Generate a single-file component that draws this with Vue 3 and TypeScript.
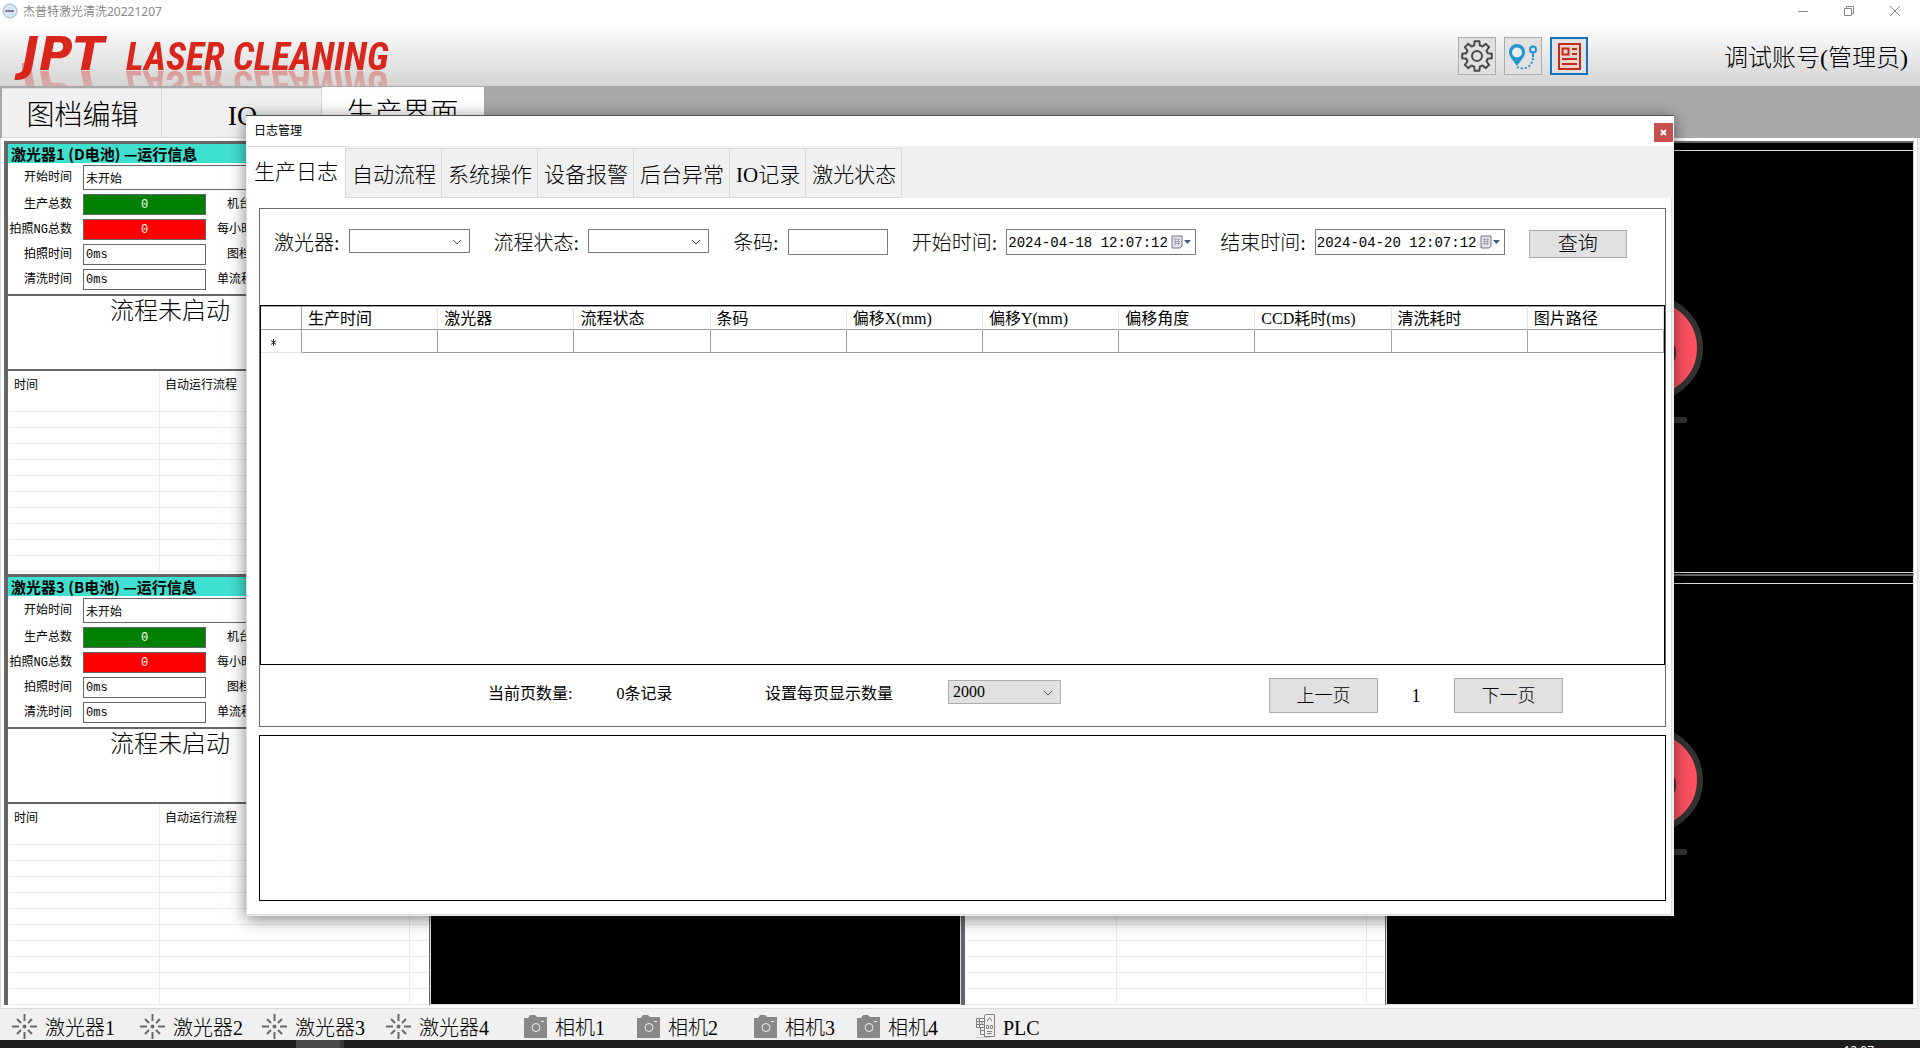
<script setup lang="ts">
import { ref } from 'vue'

interface Station {
  title: string
  start: string
  total: string
  ng: string
  photo: string
  wash: string
  state: string
}

const mainTabs = ['图档编辑', 'IO', '生产界面']
const activeMain = ref(2)

const stations: Station[] = [
  { title: '激光器1 (D电池) —运行信息', start: '未开始', total: '0', ng: '0', photo: '0ms', wash: '0ms', state: '流程未启动' },
  { title: '激光器3 (B电池) —运行信息', start: '未开始', total: '0', ng: '0', photo: '0ms', wash: '0ms', state: '流程未启动' },
]

const logTabs = ['生产日志', '自动流程', '系统操作', '设备报警', '后台异常', 'IO记录', '激光状态']
const activeLog = ref(0)

const columns = ['生产时间', '激光器', '流程状态', '条码', '偏移X(mm)', '偏移Y(mm)', '偏移角度', 'CCD耗时(ms)', '清洗耗时', '图片路径']

const startTime = ref('2024-04-18 12:07:12')
const endTime = ref('2024-04-20 12:07:12')
const barcode = ref('')
const page = ref(1)

const devices = [
  { kind: 'laser', name: '激光器1' },
  { kind: 'laser', name: '激光器2' },
  { kind: 'laser', name: '激光器3' },
  { kind: 'laser', name: '激光器4' },
  { kind: 'camera', name: '相机1' },
  { kind: 'camera', name: '相机2' },
  { kind: 'camera', name: '相机3' },
  { kind: 'camera', name: '相机4' },
  { kind: 'plc', name: 'PLC' },
]

// Outline of an eight-toothed gear centred on 18,18
function gearPath(): string {
  const pts: string[] = []
  const add = (r: number, deg: number) => {
    const a = (deg * Math.PI) / 180
    pts.push(`${(18 + r * Math.cos(a)).toFixed(2)} ${(18 + r * Math.sin(a)).toFixed(2)}`)
  }
  for (let i = 0; i < 8; i++) {
    const c = i * 45
    add(11, c - 15)
    add(15, c - 9)
    add(15, c + 9)
    add(11, c + 15)
  }
  return `M${pts.join('L')}Z`
}
const gear = gearPath()
</script>

<template>
  <div class="app">
    <div class="titlebar">
      <svg class="app-icon" viewBox="0 0 16 16" width="16" height="16">
        <circle cx="8" cy="8" r="7" fill="#d5e6f3" stroke="#9db4c6" />
        <path d="M3.500 8h9" stroke="#4d6fa8" stroke-width="2" stroke-dasharray="2 1" />
        <path d="M5.500 8h1M9 8h1" stroke="#c0504d" stroke-width="2" />
      </svg>
      <span class="app-title">杰普特激光清洗20221207</span>
      <div class="win-buttons">
        <button type="button" aria-label="最小化"><svg width="12" height="12" viewBox="0 0 12 12"><path d="M1 6.500h10" /></svg></button>
        <button type="button" aria-label="还原"><svg width="12" height="12" viewBox="0 0 12 12"><path d="M1.500 3.500h7v7h-7zM3.500 3.500v-2h7v7h-2" /></svg></button>
        <button type="button" aria-label="关闭"><svg width="12" height="12" viewBox="0 0 12 12"><path d="M1 1l10 10M11 1L1 11" /></svg></button>
      </div>
    </div>

    <header class="banner">
      <div class="logo"><span class="mark">JPT</span><span class="words">LASER CLEANING</span></div>
      <div class="tools">
        <button type="button" class="tool" aria-label="设置">
          <svg width="36" height="36" viewBox="0 0 36 36" fill="none" stroke="#4a4a4a" stroke-width="2" stroke-linejoin="round">
            <path :d="gear" /><circle cx="18" cy="18" r="5" />
          </svg>
        </button>
        <button type="button" class="tool" aria-label="路径">
          <svg width="36" height="36" viewBox="0 0 36 36" fill="none" stroke="#2494d2">
            <path d="M12 28C9 23 4 19 4 14a8 8 0 0 1 16 0c0 5-5 9-8 14z" fill="#2494d2" stroke="none" />
            <circle cx="12" cy="14.500" r="5" fill="#e6eef3" stroke="none" />
            <circle cx="28" cy="11.500" r="3" stroke-width="2" /><path d="M28 15v4" stroke-width="2" />
            <path d="M12 29c5 3 15 2 16-9" stroke-width="2" stroke-dasharray="2 2" />
          </svg>
        </button>
        <button type="button" class="tool on" aria-label="日志">
          <svg width="34" height="34" viewBox="0 0 34 34" fill="none" stroke="#c02c17" stroke-width="2">
            <path d="M7 5h21v25H7z" fill="#f3d3cd" />
            <path d="M10.500 9.500h6v6h-6zM20 10h5M20 15h5M10 20h15M10 25h15" />
          </svg>
        </button>
      </div>
      <div class="user">调试账号(管理员)</div>
    </header>

    <nav class="main-tabs">
      <button v-for="(t, i) in mainTabs" :key="t" type="button" class="main-tab" :class="{ active: i === activeMain }" @click="activeMain = i">{{ t }}</button>
    </nav>

    <main class="workspace">
      <template v-for="(s, i) in stations" :key="s.title">
        <section class="station">
          <h2>{{ s.title }}</h2>
          <div class="info">
            <label :for="'start' + i">开始时间</label>
            <input :id="'start' + i" class="start" :value="s.start" readonly />
            <label :for="'total' + i">生产总数</label>
            <input :id="'total' + i" class="count ok" :value="s.total" readonly />
            <span class="side short">机台</span>
            <label :for="'ng' + i">拍照NG总数</label>
            <input :id="'ng' + i" class="count bad" :value="s.ng" readonly />
            <span class="side">每小时</span>
            <label :for="'photo' + i">拍照时间</label>
            <input :id="'photo' + i" :value="s.photo" readonly />
            <span class="side short">图档</span>
            <label :for="'wash' + i">清洗时间</label>
            <input :id="'wash' + i" :value="s.wash" readonly />
            <span class="side">单流程</span>
          </div>
          <div class="state">{{ s.state }}</div>
          <table class="flow">
            <thead><tr><th class="c-time">时间</th><th class="c-flow">自动运行流程</th><th></th></tr></thead>
            <tbody><tr v-for="n in 11" :key="n"><td></td><td></td><td></td></tr></tbody>
          </table>
        </section>
        <div class="view" :class="{ last: i === 1 }"><div class="canvas"></div></div>
        <section class="station lower">
          <table class="flow">
            <thead><tr><th class="c-time"></th><th class="c-flow"></th><th></th></tr></thead>
            <tbody><tr v-for="n in 11" :key="n"><td></td><td></td><td></td></tr></tbody>
          </table>
        </section>
        <div class="view" :class="{ last: i === 1 }">
          <div class="canvas">
            <svg width="128" height="134" viewBox="0 0 128 134">
              <circle cx="64" cy="53" r="50" fill="#ff5160" stroke="#333" stroke-width="6" />
              <ellipse cx="64" cy="58" rx="26" ry="22" fill="#333" />
              <path d="M30 125h68" stroke="#333" stroke-width="6" stroke-linecap="round" />
            </svg>
          </div>
        </div>
      </template>
    </main>

    <footer class="devices">
      <div v-for="d in devices" :key="d.name" class="device">
        <svg v-if="d.kind === 'laser'" width="25" height="25" viewBox="0 0 25 25" stroke="#6a6a6a" stroke-width="2">
          <path d="M12.500 0v7M12.500 18v7M0 12.500h7M18 12.500h7M5 5l4 4M16 16l4 4M5 20l4-4M16 9l4-4" />
          <circle cx="12.500" cy="12.500" r="1" />
        </svg>
        <svg v-else-if="d.kind === 'camera'" width="23" height="23" viewBox="0 0 23 23">
          <path d="M0 3h4l2-3h5l2 2h10v20a1 1 0 0 1-1 1H1a1 1 0 0 1-1-1z" fill="#888" />
          <circle cx="12" cy="12.500" r="4" fill="none" stroke="#f0f0f0" /><path d="M17 6.500h3" stroke="#f0f0f0" />
        </svg>
        <svg v-else width="19" height="24" viewBox="0 0 19 24" fill="none" stroke="#808080">
          <path d="M8.500 1.500l2-1h8v22h-10zM.500 4.500h8v9h-8zM1 7.500h7M1 10.500h7M4.500 14v6.500h4M4.500 16.500h4" />
          <path d="M3.500 5v8M6 7v4M11 7.500l2.500-4 2.500 4M10.500 11.500h2v3h-2zM14.500 11.500h2v3h-2zM11 19.500h5M11 17.500h5" />
          <path d="M0 23.500h14" stroke="#ccc" />
        </svg>
        <span>{{ d.name }}</span>
      </div>
    </footer>
    <div class="taskbar"><span class="task"></span><span class="task-edge"></span><span class="clock">12:07</span></div>

    <section class="dialog" role="dialog" aria-labelledby="dlg-title">
      <div class="dlg-head">
        <span id="dlg-title">日志管理</span>
        <button type="button" class="close" aria-label="关闭"><svg width="7" height="7" viewBox="0 0 7 7"><path d="M1 1l5 5M6 1L1 6" stroke="#fff" stroke-width="2" /></svg></button>
      </div>
      <nav class="log-tabs">
        <button v-for="(t, i) in logTabs" :key="t" type="button" class="log-tab" :class="{ active: i === activeLog }" @click="activeLog = i">{{ t }}</button>
      </nav>
      <div class="dlg-body">
        <div class="log-panel">
          <form class="filters" @submit.prevent>
            <div class="field">
              <label for="laser">激光器:</label>
              <span class="combo"><select id="laser"><option></option></select><svg width="10" height="6" viewBox="0 0 10 6"><path d="M1 1l4 4 4-4" /></svg></span>
            </div>
            <div class="field">
              <label for="flow">流程状态:</label>
              <span class="combo"><select id="flow"><option></option></select><svg width="10" height="6" viewBox="0 0 10 6"><path d="M1 1l4 4 4-4" /></svg></span>
            </div>
            <div class="field"><label for="code">条码:</label><input id="code" v-model="barcode" class="code" /></div>
            <div class="field">
              <label for="from">开始时间:</label>
              <span class="date"><input id="from" v-model="startTime" /><button type="button" aria-label="选择开始时间"><svg width="20" height="14" viewBox="0 0 20 14"><path d="M1 1h10v10l-2 2H1z" fill="#e4e4ea" stroke="#77737a" /><path d="M3 4.500h6M3 6.500h6M3 8.500h6M4.500 3v7M7.500 3v7" stroke="#a3a8bb" /><path d="M13 5h7l-3.500 4z" fill="#41588c" /></svg></button></span>
            </div>
            <div class="field">
              <label for="to">结束时间:</label>
              <span class="date"><input id="to" v-model="endTime" /><button type="button" aria-label="选择结束时间"><svg width="20" height="14" viewBox="0 0 20 14"><path d="M1 1h10v10l-2 2H1z" fill="#e4e4ea" stroke="#77737a" /><path d="M3 4.500h6M3 6.500h6M3 8.500h6M4.500 3v7M7.500 3v7" stroke="#a3a8bb" /><path d="M13 5h7l-3.500 4z" fill="#41588c" /></svg></button></span>
            </div>
            <button type="submit" class="btn query">查询</button>
          </form>
          <div class="grid-box">
            <table class="records">
              <thead><tr><th class="mark-col"></th><th v-for="c in columns" :key="c">{{ c }}</th></tr></thead>
              <tbody><tr><td class="mark-col"><svg width="5" height="7" viewBox="0 0 5 7"><path d="M2.500 0v7M0 1.500l5 4M5 1.500l-5 4" stroke="#222" /></svg></td><td v-for="c in columns" :key="c"></td></tr></tbody>
            </table>
          </div>
          <div class="pager">
            <div class="pager-info"><span>当前页数量:</span><span>0条记录</span></div>
            <label for="size">设置每页显示数量</label>
            <span class="combo size"><select id="size"><option>2000</option></select><svg width="10" height="6" viewBox="0 0 10 6"><path d="M1 1l4 4 4-4" /></svg></span>
            <div class="pager-nav">
              <button type="button" class="btn step">上一页</button>
              <span class="page-no">{{ page }}</span>
              <button type="button" class="btn step">下一页</button>
            </div>
          </div>
        </div>
        <div class="output"></div>
      </div>
    </section>
  </div>
</template>

<style>
body { margin: 0; overflow: hidden; }
</style>

<style scoped>
.app, .app * { box-sizing: border-box; }
.app {
  position: relative;
  display: flex;
  flex-direction: column;
  height: 100vh;
  overflow: hidden;
  background: #f0f0f0;
  color: #000;
  font-family: "Liberation Serif", "Noto Sans CJK SC", serif;
  font-weight: 300;
}
button, input, select { font: inherit; color: inherit; margin: 0; padding: 0; border-radius: 0; outline: none; }
svg { display: block; flex: none; }

.titlebar { display: flex; align-items: center; height: 23px; background: #fff; padding: 0 2px; flex: none; }
.app-icon { margin-bottom: 2px; }
.app-title { margin-left: 5px; font: 12px/20px "Noto Sans", "Noto Sans CJK SC", sans-serif; color: #888; flex: 1; }
.win-buttons { display: flex; }
.win-buttons button { width: 46px; height: 22px; display: grid; place-items: center; border: 0; background: none; }
.win-buttons svg { fill: none; stroke: #888; margin-bottom: 2px; }

.banner { display: flex; align-items: center; height: 63px; flex: none; overflow: hidden; padding: 0 12px 0 22px; background: linear-gradient(#fff, #d4d4d4); }
.logo { flex: 1; display: flex; align-items: baseline; height: 47px; line-height: 47px; color: #d9261c; font-weight: 700; font-style: italic; -webkit-box-reflect: below -15px linear-gradient(transparent, rgba(0, 0, 0, 0.45)); }
.mark { width: 104px; font-family: "DejaVu Sans", sans-serif; font-size: 46px; }
.words { font-family: "Roboto Condensed", "Liberation Sans Narrow", "Noto Sans CJK SC", sans-serif; font-size: 38px; white-space: nowrap; }
.tools { display: flex; gap: 8px; margin-top: 2px; }
.tool { width: 38px; height: 38px; display: grid; place-items: center; border: 1px solid #adadad; background: #e1e1e1; }
.tool.on { border: 2px solid #1373bf; }
.user { width: 320px; text-align: right; font-size: 24px; line-height: 32px; padding-top: 6px; }

.main-tabs { display: flex; align-items: flex-end; height: 52px; flex: none; background: #a9a9a9; padding-left: 2px; }
.main-tab { width: 160px; height: 50px; border: 1px solid #d9d9d9; border-left-width: 0; background: #f0f0f0; font-size: 28px; line-height: 42px; padding: 6px 0 0 2px; }
.main-tab.active { width: 162px; height: 51px; background: #fff; border-color: #fff; padding: 2px 0 0; }

.workspace { flex: 1; min-height: 0; display: grid; grid-template-columns: 426fr 531fr 425fr 528fr; grid-template-rows: 433fr 431fr; background: #fff; border: solid #d9d9d9; border-width: 0 1px 1px; padding: 3px; margin-right: 2px; }
.station { display: flex; flex-direction: column; min-width: 0; min-height: 0; overflow: hidden; border: solid #66666a; border-width: 3px 1px 0 4px; background: #fff; }
.station h2 { margin: 0; height: 19px; padding-left: 3px; background: #40e0d0; font: 700 15px/19px "Noto Sans CJK SC", sans-serif; white-space: nowrap; flex: none; }
.info { display: grid; grid-template-columns: 64px 123px 1fr; grid-template-rows: 25px repeat(4, 21px); gap: 4px 11px; padding: 2px 0 4px; font: 400 12px/20px "Liberation Mono", "Noto Sans CJK SC", monospace; align-items: center; flex: none; }
.info label { text-align: right; white-space: nowrap; }
.info input { width: 100%; height: 100%; border: 1px solid #66666a; background: #fff; padding: 0 2px; }
.info .start { grid-column: 2 / 4; }
.info .count { text-align: center; color: #fff; }
.info .ok { background: #008000; }
.info .bad { background: #f00; }
.side.short { padding-left: 10px; }
.state { height: 75px; flex: none; border-top: 2px solid #66666a; padding-left: 102px; font-size: 24px; line-height: 30px; }
.flow { width: 100%; flex: none; border-collapse: separate; border-spacing: 0; table-layout: fixed; border-top: 2px solid #66666a; font-size: 12px; font-weight: 400; padding: 0 1px; }
.flow th { height: 25px; padding: 2px 0 0 5px; border-right: 1px solid #ececec; text-align: left; font-weight: 400; line-height: 16px; }
.flow td { height: 16px; padding: 0; border: solid #ececec; border-width: 0 1px 1px 0; }
.flow th:last-child, .flow td:last-child { border-right: 0; }
.c-time { width: 151px; }
.c-flow { width: 250px; }
.lower { justify-content: flex-end; }
.view { min-width: 0; min-height: 0; display: flex; background: #000; border: solid #ddd; border-width: 2px 1px 0; border-top-color: #666; padding: 7px 0 1px; }
.view.last { padding-bottom: 0; }
.canvas { flex: 1; display: flex; align-items: center; justify-content: center; border: solid #ddd; border-width: 1px 0; }

.devices { display: grid; grid-template-columns: 128px 122px 124px 138px 113px 117px 103px 119px auto; height: 31px; flex: none; padding-left: 12px; font-size: 20px; line-height: 30px; }
.device { display: flex; align-items: center; gap: 8px; white-space: nowrap; }
.device span { padding-top: 4px; }
.taskbar { display: flex; height: 8px; flex: none; overflow: hidden; background: #1e1e1e; padding-left: 296px; }
.task { width: 44px; background: #4a4a4a; }
.task-edge { width: 4px; background: #383838; }
.clock { margin-left: auto; margin-right: 46px; padding-top: 3px; color: #fff; font: 12px/16px "Open Sans", sans-serif; }

.dialog { position: absolute; top: 115px; right: 246px; bottom: 132px; left: 246px; display: flex; flex-direction: column; background: #f0f0f0; border-top: 1px solid #555; box-shadow: 0 3px 16px rgba(0, 0, 0, 0.5); }
.dlg-head { display: flex; align-items: center; justify-content: space-between; height: 30px; padding: 0 1px 0 8px; background: #fff; font: 12px/20px "Noto Sans CJK SC", sans-serif; flex: none; }
#dlg-title { padding-bottom: 2px; }
.close { width: 19px; height: 19px; display: grid; place-items: center; border: 0; background: #c75050; margin-top: 3px; }
.log-tabs { display: flex; align-items: flex-end; height: 52px; flex: none; padding-left: 1px; }
.log-tab { height: 50px; padding: 4px 5px 0 6px; border: 1px solid #d9d9d9; border-left: 0; background: #f0f0f0; font-size: 21px; line-height: 40px; white-space: nowrap; }
.log-tab.active { height: 52px; padding: 0 7px 1px; background: #fff; border-bottom: 0; }
.dlg-body { flex: 1; min-height: 0; display: flex; flex-direction: column; gap: 8px; background: #fff; border: solid #d9d9d9; border-width: 0 1px 1px; padding: 10px 5px 13px 12px; margin: 0 2px 1px 0; }
.log-panel { flex: 1; min-height: 0; display: flex; flex-direction: column; border: 1px solid #696969; }
.filters { display: flex; align-items: flex-start; height: 96px; flex: none; padding: 20px 0 0 14px; gap: 24px; font-size: 20px; }
.field { display: flex; align-items: flex-start; gap: 9px; }
.field label { line-height: 28px; white-space: nowrap; }
.combo { position: relative; display: block; width: 121px; height: 24px; }
.combo select { width: 100%; height: 100%; appearance: none; border: 1px solid #7a7a7a; background: #fff; padding: 0 4px; }
.combo svg { position: absolute; right: 8px; top: 10px; fill: none; stroke: #555; pointer-events: none; }
.code, .date { height: 26px; border: 1px solid #7a7a7a; background: #fff; }
.code { width: 100px; }
.date { display: flex; align-items: center; width: 190px; }
.date input { flex: 1; min-width: 0; height: 24px; border: 0; background: none; padding: 2px 0 0 1px; font: 14px/22px "Liberation Mono", monospace; }
.date button { width: 24px; border: 0; background: none; }
.btn { border: 1px solid #adadad; background: #e1e1e1; }
.query { width: 98px; height: 28px; line-height: 24px; margin-top: 1px; }
.grid-box { flex: 1; min-height: 0; border: 1px solid #000; }
.records { width: 100%; table-layout: fixed; border-collapse: separate; border-spacing: 0; font-size: 16px; }
.records th { height: 24px; padding: 1px 0 0 6px; border: solid #e5e5e5; border-width: 1px 1px 1px 0; border-top-color: #a0a0a0; border-bottom-color: #a0a0a0; text-align: left; font-weight: 400; line-height: 20px; white-space: nowrap; }
.records td { height: 23px; padding: 0; border: solid #a0a0a0; border-width: 0 1px 1px 0; }
.records .mark-col { width: 41px; border-right-color: #a0a0a0; }
.records td.mark-col { padding: 3px 0 0 10px; border-bottom-color: #e5e5e5; }
.pager { display: flex; align-items: flex-start; height: 61px; flex: none; padding: 13px 102px 0 228px; font-size: 16px; font-weight: 400; line-height: 32px; }
.pager-info { display: flex; gap: 44px; width: 277px; }
.pager label { width: 183px; }
.combo.size { width: 113px; margin-top: 2px; line-height: 20px; }
.combo.size select { background: #e1e1e1; border-color: #adadad; }
.pager-nav { display: flex; align-items: center; margin-left: auto; font-size: 18px; font-weight: 300; }
.step { width: 109px; height: 35px; }
.page-no { width: 76px; text-align: center; }
.output { height: 166px; flex: none; border: 1px solid #000; }
</style>
